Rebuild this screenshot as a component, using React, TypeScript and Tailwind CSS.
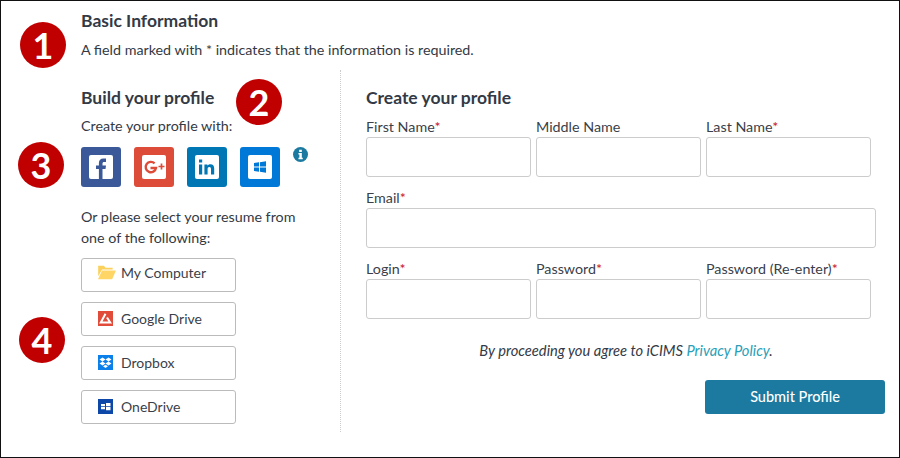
import type { ReactNode } from 'react';

function Badge({ n, className }: { n: number; className: string }) {
  return (
    <div className={`absolute flex h-[46px] w-[46px] items-center justify-center rounded-full bg-[#c00000] text-[36px] leading-none font-bold text-white ${className}`}>
      {n}
    </div>
  );
}

function Social({ bg, children }: { bg: string; children: ReactNode }) {
  return (
    <div className={`flex h-10 w-10 items-center justify-center rounded-[3px] ${bg}`}>
      <div className="flex h-6 w-6 items-center justify-center overflow-hidden rounded-[2px] bg-white">{children}</div>
    </div>
  );
}

function FileButton({ icon, label, className }: { icon: ReactNode; label: string; className?: string }) {
  return (
    <button className={`flex h-[34px] w-[155px] items-center gap-2 rounded-[3px] border border-[#bbbbbb] bg-white pl-4 text-[14px] text-[#3a3f4a] ${className ?? ''}`}>
      <span className="w-[15px] shrink-0">{icon}</span>
      <span>{label}</span>
    </button>
  );
}

function Field({ label, required, wide }: { label: string; required?: boolean; wide?: boolean }) {
  return (
    <div className={wide ? 'w-[510px]' : 'w-[165px]'}>
      <div className="h-[20px] text-[14.3px] leading-[20px] text-[#3a3f4a]">
        {label}
        {required && <span className="text-[#c8102e]">*</span>}
      </div>
      <input className="block h-10 w-full rounded-[3px] border border-[#cccccc] bg-white" />
    </div>
  );
}

export default function App() {
  return (
    <div className="relative h-[458px] w-[900px] overflow-hidden border border-[#111111] bg-white pl-[80px] font-['Lato','Noto_Sans',sans-serif] text-[#333a45]">
      <Badge n={1} className="top-[21px] left-[19px]" />
      <Badge n={2} className="top-[78px] left-[235px]" />
      <Badge n={3} className="top-[141px] left-[17px]" />
      <Badge n={4} className="top-[316px] left-[18px]" />

      <h1 className="mt-[8px] text-[17.5px] leading-[24px] font-bold">Basic Information</h1>
      <p className="mt-[7px] text-[14.3px] leading-[20px]">A field marked with * indicates that the information is required.</p>

      <div className="mt-[10px] flex">
        {/* left column */}
        <div className="h-[362px] w-[260px] border-r border-dotted border-[#cccccc]">
          <h2 className="mt-[16px] text-[17.5px] leading-[24px] font-bold">Build your profile</h2>
          <p className="mt-[6px] text-[14.3px] leading-[20px]">Create your profile with:</p>
          <div className="relative mt-[11px] flex gap-[13px]">
            <Social bg="bg-[#3b5998]">
              <svg viewBox="0 0 24 24" className="h-6 w-6"><path fill="#3b5998" d="M13.5 24v-10h3l.5-3.6h-3.5V8.6c0-1 .4-1.7 1.8-1.7H17V3.6c-.4 0-1.5-.1-2.7-.1-2.7 0-4.4 1.6-4.4 4.6v2.3H7V14h2.9v10z" /></svg>
            </Social>
            <Social bg="bg-[#dd4b39]">
              <svg viewBox="0 0 24 24" className="h-6 w-6"><path fill="none" stroke="#dd4b39" strokeWidth="2.4" d="M12.6 8.4A5.2 5.2 0 1 0 14 13H8.5" /><path stroke="#dd4b39" strokeWidth="1.7" d="M16.5 11.5h6M19.5 8.5v6" /></svg>
            </Social>
            <Social bg="bg-[#0077b5]">
              <svg viewBox="0 0 24 24" className="h-6 w-6"><path fill="#0077b5" d="M4 9.5h3.2V19.5H4zM4 4.5h3.2v3H4zM9.4 9.5h3v1.3c.6-1 1.7-1.5 3-1.5 2.5 0 3.8 1.5 3.8 4.2v6h-3.2v-5.2c0-1.4-.5-2.2-1.7-2.2s-1.7.8-1.7 2.2v5.2H9.4z" /></svg>
            </Social>
            <Social bg="bg-[#0078d7]">
              <svg viewBox="0 0 24 24" className="h-6 w-6"><path fill="#0078d7" d="M6 8l5-.7v4.2H6zM12 7.2l6-.9v5.2h-6zM6 12.5h5v4.2L6 16zM12 12.5h6v5.2l-6-.9z" /></svg>
            </Social>
            <svg viewBox="0 0 16 16" className="absolute top-0 left-[212px] h-[15px] w-[15px]">
              <circle cx="8" cy="8" r="8" fill="#1c7aa0" />
              <path fill="#fff" d="M6.6 3h2.8v2.3H6.6zM5.8 6.5h3.6v5h1v1.5H5.8v-1.5h1V8h-1z" />
            </svg>
          </div>
          <p className="mt-[19px] w-[230px] text-[14.3px] leading-[21px]">Or please select your resume from one of the following:</p>
          <div className="mt-[10px]">
            <FileButton
              className="pb-[5px]"
              label="My Computer"
              icon={<svg viewBox="0.8 1 18.7 14" className="h-[15px] w-[18px] max-w-none"><path fill="#fbd05b" d="M1 1h6l1.5 2H16v2H5L1 12z" /><path fill="#ffd566" d="M5 6h14.5L15.5 15H0.8z" /></svg>}
            />
            <FileButton
              className="mt-[10px] pb-[2px]"
              label="Google Drive"
              icon={<svg viewBox="0 0 15 15" className="h-[15px] w-[15px]"><rect width="15" height="15" fill="#e04b3a" /><path fill="none" stroke="#fff" strokeWidth="2" d="M7.5 2.8 2.8 11.5h9.4L9 6.5" /></svg>}
            />
            <FileButton
              className="mt-[10px] pb-[2px]"
              label="Dropbox"
              icon={<svg viewBox="0 0 15 15" className="h-[15px] w-[15px]"><rect width="15" height="15" fill="#0b80ea" /><path fill="#fff" d="M4.5 2.5 7.5 4.5 4.5 6.5 7.5 8.5 4.5 10.5 1.5 8.5 4.5 6.5 1.5 4.5zM10.5 2.5 13.5 4.5 10.5 6.5 13.5 8.5 10.5 10.5 7.5 8.5 10.5 6.5 7.5 4.5zM5 11.3l2.5-1.6 2.5 1.6-2.5 1.7z" /></svg>}
            />
            <FileButton
              className="mt-[10px] pb-[2px]"
              label="OneDrive"
              icon={<svg viewBox="0 0 15 15" className="h-[15px] w-[15px]"><rect width="15" height="15" fill="#0d47a8" /><path fill="#fff" d="M3 5h4v2.3H3zM8 4h4.5v3.3H8zM3 8h4v2.3H3zM8 8h4.5v3.3H8z" /></svg>}
            />
          </div>
        </div>

        {/* right column */}
        <div className="pl-[25px]">
          <h2 className="mt-[16px] text-[17.5px] leading-[24px] font-bold">Create your profile</h2>
          <div className="mt-[7px] flex gap-[5px]">
            <Field label="First Name" required />
            <Field label="Middle Name" />
            <Field label="Last Name" required />
          </div>
          <div className="mt-[11px]">
            <Field label="Email" required wide />
          </div>
          <div className="mt-[11px] flex gap-[5px]">
            <Field label="Login" required />
            <Field label="Password" required />
            <Field label="Password (Re-enter)" required />
          </div>
          <p className="mt-[21px] w-[520px] text-center text-[14.7px] leading-[20px] italic">
            By proceeding you agree to iCIMS <a className="text-[#2aa0b8]">Privacy Policy</a>.
          </p>
          <div className="mt-[20px] flex w-[519px] justify-end">
            <button className="h-[34px] w-[180px] rounded-[3px] bg-[#1c7aa0] text-[14.5px] font-medium text-white">Submit Profile</button>
          </div>
        </div>
      </div>
    </div>
  );
}
